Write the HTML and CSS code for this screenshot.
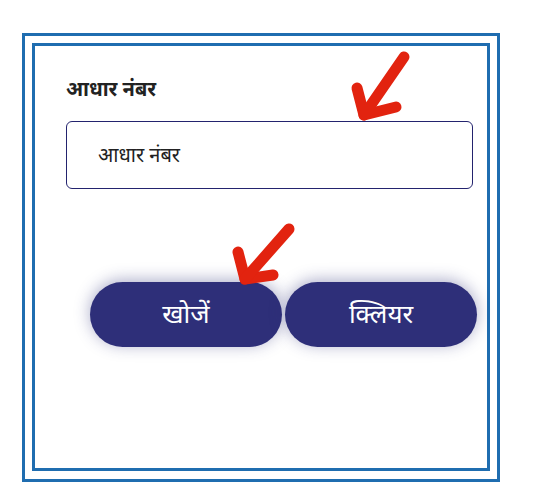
FILE: index.html
```html
<!DOCTYPE html>
<html lang="hi">
<head>
<meta charset="utf-8">
<link rel="stylesheet" href="styles.css">
</head>
<body>
<div class="outer">
  <div class="inner">
    <label class="label" for="aadhar">आधार नंबर</label>
    <div class="input" id="aadhar">आधार नंबर</div>
    <div class="buttons">
      <button class="btn">खोजें</button>
      <button class="btn">क्लियर</button>
    </div>
  </div>
</div>
<svg class="arrows" width="540" height="498" viewBox="0 0 540 498">
  <g fill="none" stroke="#e2230f" stroke-width="11" stroke-linecap="round" stroke-linejoin="round">
    <polyline points="357,88 364,115 396,107"/>
    <line x1="364" y1="115" x2="404" y2="57"/>
    <polyline points="238,252 245,279 273,275"/>
    <line x1="245" y1="279" x2="289" y2="229"/>
  </g>
</svg>
</body>
</html>
```

FILE: styles.css
```css
html, body {
  margin: 0;
  padding: 0;
  background: #ffffff;
}
body {
  width: 540px;
  height: 498px;
  position: relative;
  overflow: hidden;
  font-family: "Noto Sans Devanagari", "Noto Sans", sans-serif;
  color: #222222;
}
.outer {
  box-sizing: border-box;
  margin: 33px 0 0 22px;
  width: 478px;
  height: 449px;
  border: 3px solid #1f6db0;
  padding: 7px;
}
.inner {
  box-sizing: border-box;
  height: 428px;
  border: 3px solid #1f6db0;
  padding: 33px 14px 0 31px;
}
.label {
  display: block;
  height: 24px;
  line-height: 24px;
  font-size: 20px;
  font-weight: 700;
  color: #222222;
}
.input {
  box-sizing: border-box;
  margin-top: 18px;
  height: 68px;
  border: 1px solid #23236e;
  border-radius: 6px;
  padding: 4px 0 0 31px;
  display: flex;
  align-items: center;
  font-size: 20px;
  color: #222222;
}
.buttons {
  display: flex;
  gap: 3px;
  margin: 93px 0 0 24px;
  width: 387px;
}
.btn {
  flex: 1;
  height: 65px;
  border: none;
  border-radius: 33px;
  background: #2e2f79;
  color: #ffffff;
  font-family: "Noto Sans Devanagari", "Noto Sans", sans-serif;
  font-size: 26px;
  box-shadow: 0 -2px 16px rgba(46, 47, 121, 0.4);
  padding: 5px 0 0 0;
}
.arrows {
  position: absolute;
  left: 0;
  top: 0;
  pointer-events: none;
}
```
